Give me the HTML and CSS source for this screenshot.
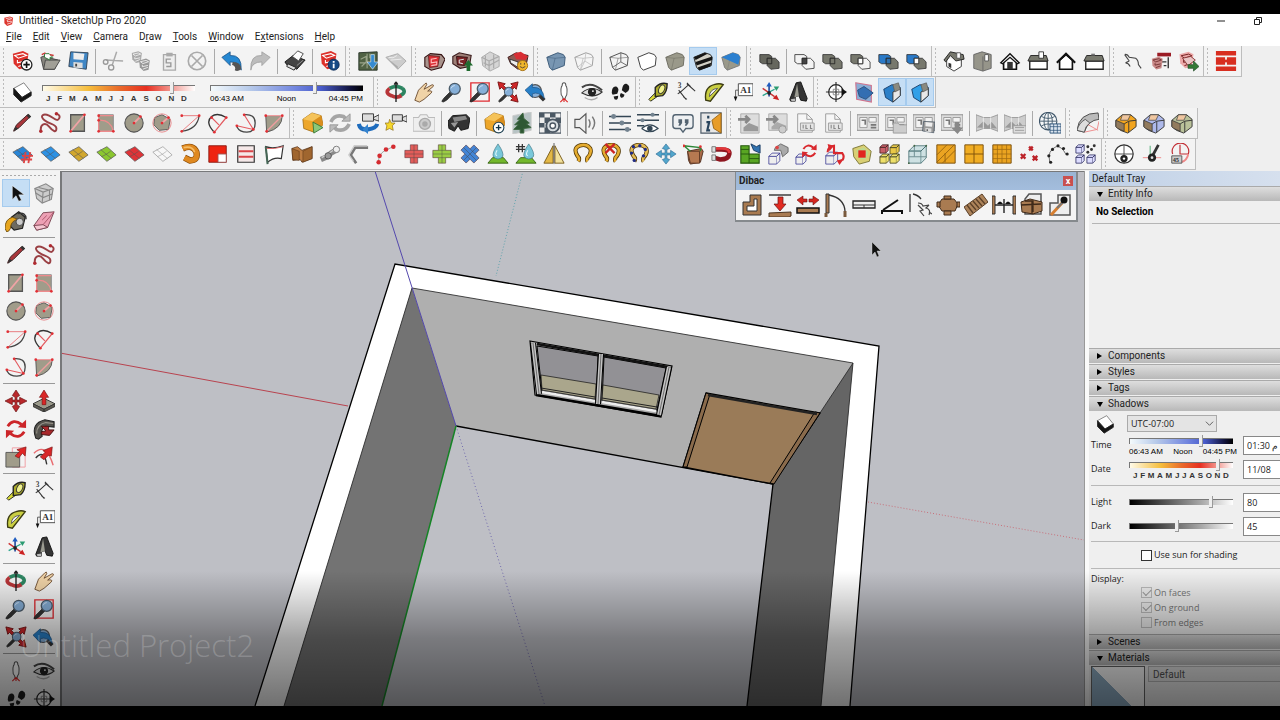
FILE: index.html
```html
<!DOCTYPE html>
<html lang="en">
<head>
<meta charset="utf-8">
<title>Untitled - SketchUp Pro 2020</title>
<link rel="stylesheet" href="styles.css">
</head>
<body>
<div class="app">
  <header class="titlebar">
    <svg class="logo" viewBox="0 0 24 24"><path d="M3 5 15 2 22 5 20 19 9 23 3 17Z" fill="#dc352d"/><path d="M6 7l9-2 4 2-10 3 1 4 8-2v4l-9 3" fill="none" stroke="#fff" stroke-width="1.5"/></svg>
    <h1 class="title">Untitled - SketchUp Pro 2020</h1>
    <div class="winctl">
      <button aria-label="Minimize"><svg viewBox="0 0 12 12"><path d="M2 6h8" stroke="#222" fill="none"/></svg></button>
      <button aria-label="Restore"><svg viewBox="0 0 12 12"><path d="M2.500 4.500h5v5h-5zM4.500 4V2.500h5v5H8" stroke="#222" fill="none"/></svg></button>
    </div>
  </header>
  <nav class="menubar">
    <button><u>F</u>ile</button><button><u>E</u>dit</button><button><u>V</u>iew</button><button><u>C</u>amera</button><button>D<u>r</u>aw</button><button><u>T</u>ools</button><button><u>W</u>indow</button><button>E<u>x</u>tensions</button><button><u>H</u>elp</button>
  </nav>
  <div class="toolrows">
    <div class="row">
      <div class="group" data-tools="new open save | cut copy paste delete | undo redo | print | model-info"></div>
      <div class="group" data-tools="add-location toggle-terrain"></div>
      <div class="group" data-tools="warehouse share-model share-component extension-warehouse"></div>
      <div class="group" data-tools="x-ray back-edges | wireframe hidden-line shaded *textured monochrome"></div>
      <div class="group" data-tools="outer-shell | intersect union subtract trim split"></div>
      <div class="group" data-tools="iso top front right back left"></div>
      <div class="group" data-tools="interact component-options component-attributes"></div>
      <div class="group" data-tools="brick-wall"></div>
    </div>
    <div class="row">
      <div class="group" data-tools="shadow">
        <label class="scale year"><input type="range" aria-label="Date" value="86"><span class="ticks"><i>J</i><i>F</i><i>M</i><i>A</i><i>M</i><i>J</i><i>J</i><i>A</i><i>S</i><i>O</i><i>N</i><i>D</i></span></label>
        <label class="scale day"><input type="range" aria-label="Time" value="69"><span class="ticks"><i>06:43 AM</i><i>Noon</i><i>04:45 PM</i></span></label>
      </div>
      <div class="group" data-tools="orbit pan zoom zoom-window zoom-extents previous position-camera look-around walk"></div>
      <div class="group" data-tools="tape dimension protractor text axes text-3d"></div>
      <div class="group" data-tools="section-plane show-planes *show-cuts *show-fill"></div>
    </div>
    <div class="row">
      <div class="group" data-tools="line freehand rectangle rotated-rectangle circle polygon arc two-point-arc three-point-arc pie"></div>
      <div class="group" data-tools="enscape-start sync orbit-sync add-view screenshot | vr | add-asset vegetation material-editor | sound | visual-settings view-settings | feedback about"></div>
      <div class="group" data-tools="export-scene export-as report-doc report-table | plan-a plan-b plan-save plan-down | pano pano-batch | web-export"></div>
      <div class="group" data-tools="bend"></div>
      <div class="group" data-tools="round-corner sharp-corner bevel"></div>
    </div>
    <div class="row">
      <div class="group" data-tools="tile-grid tile-blue tile-gold tile-green tile-red tile-white extrude-c red-corner stripes flag box-brown pipe bracket curve-dots plus-red plus-green cross-blue drop drop-grid mirror hook hook-cut hook-dots scatter crate magnet blocks cube-grey cube-turn cube-spin inset quad-cubes glass-box wood-a wood-b wood-c red-marks arc-dots array"></div>
      <div class="group" data-tools="compass sun-angle protractor-red"></div>
    </div>
  </div>

  <main class="workspace">
    <aside class="sidebar" data-tools="*select component bucket eraser | line freehand rectangle rotated-rectangle circle polygon arc two-point-arc three-point-arc pie | move push-pull rotate follow-me scale offset | tape dimension protractor text axes text-3d | orbit pan zoom zoom-window zoom-extents previous | position-camera look-around walk section-plane"></aside>

    <section class="viewport" aria-label="Model view">
      <svg class="scene" viewBox="62 172 1022 534" preserveAspectRatio="xMidYMin slice">
        <path d="M60 353 348 406" stroke="#b8434f" fill="none"/>
        <path d="M868 502 1084 540" stroke="#c8707b" stroke-dasharray="1 2" fill="none"/>
        <path d="M523 171 496 276" stroke="#60a3ad" stroke-dasharray="1 2" fill="none"/>
        <path d="M395 264 879 346 850 706H821L853 363 412 288 284 706H255Z" fill="#fff"/>
        <path d="M412 288 853 363 773 484 456 426Z" fill="#afafaf"/>
        <path d="M412 288 456 426 382 706H284Z" fill="#737373"/>
        <path d="M853 363 773 484 747 706H821Z" fill="#656565"/>
        <path d="M255 706 395 264 879 346 850 706" fill="none" stroke="#000" stroke-width="1.300"/>
        <path d="M284 706 412 288 853 363 821 706M853 363 773 484" fill="none" stroke="#222" stroke-width=".8"/>
        <path d="M456 426 773 484 747 706" fill="none" stroke="#000" stroke-width="1.300"/>
        <path d="M530 341 672 366 661 417 535 395Z" fill="#aaa" stroke="#000" stroke-width="1.200"/>
        <path d="M537 346 598 356 596 400 542 391Z" fill="#929195" stroke="#000"/>
        <path d="M604 357 666 368 657 410 602 401Z" fill="#929195" stroke="#000"/>
        <path d="M541 375 596 384 595 399 542 390ZM603 385 659 395 656 409 602 400Z" fill="#aaa68c" stroke="#111" stroke-width=".7"/>
        <path d="M541 388 595 397M602 398 657 407" stroke="#222" fill="none"/>
        <path d="M542 392 595 401M602 402 656 411" stroke="#eee" stroke-width="2.500" fill="none"/>
        <path d="M536 395 661 416" stroke="#000" stroke-width="2.500" fill="none"/>
        <path d="M537 344 668 367" stroke="#111" stroke-width="2.500" fill="none"/>
        <path d="M533 343 539 394M601 354 598 404M669 367 659 415" stroke="#000" stroke-width="6" fill="none"/>
        <path d="M533 343 539 394M601 354 598 404M669 367 659 415" stroke="#c4c4c4" stroke-width="4" fill="none"/>
        <path d="M533 343 539 394M601 354 598 404M669 367 659 415" stroke="#333" stroke-width=".6" fill="none"/>
        <path d="M706 393 820 413 773 484 683 467Z" fill="#9a7b58" stroke="#000" stroke-width="1.300"/>
        <path d="M706 393 710 394 687 467 683 467ZM820 413 815 412 770 483 774 484Z" fill="#8a6b4c" stroke="#000" stroke-width="1"/>
        <path d="M708 395 817 414" stroke="#222" stroke-width="2.500" fill="none"/>
        <path d="M375 171 456 426" stroke="#5448ad" fill="none"/>
        <path d="M456 426 545 706" stroke="#7069ad" stroke-dasharray="1 2.500" fill="none"/>
        <path d="M456 426 382 706" stroke="#158425" stroke-width="1.500" fill="none"/>
        <path d="M872 242v13l3-3 2 5 2-1-2-5h4Z" fill="#111" stroke="#ddd" stroke-width=".4"/>
      </svg>
      <div class="float">
        <header class="float-title"><span>Dibac</span><button class="close" aria-label="Close">x</button></header>
        <div class="float-tools" data-tools="d-wall d-parallel d-extend d-door d-window d-swing d-hand d-table d-stairs d-dimension d-convert d-paint"></div>
      </div>
    </section>

    <aside class="tray">
      <h2 class="tray-title">Default Tray</h2>
      <button class="head open">Entity Info</button>
      <div class="entity"><strong>No Selection</strong></div>
      <button class="head">Components</button>
      <button class="head">Styles</button>
      <button class="head">Tags</button>
      <button class="head open">Shadows</button>
      <div class="shadows">
        <div class="zone">
          <span class="zone-icon" data-icon="shadow"></span>
          <span class="picker"><select aria-label="Time zone"><option>UTC-07:00</option></select><svg viewBox="0 0 10 10"><path d="M1 3l4 4 4-4" fill="none" stroke="#555"/></svg></span>
        </div>
        <div class="field"><label for="t">Time</label><div class="scale day small"><input type="range" aria-label="Time of day" value="70"><span class="ticks"><i>06:43 AM</i><i>Noon</i><i>04:45 PM</i></span></div><input class="num" id="t" value="01:30 م"></div>
        <div class="field"><label for="d">Date</label><div class="scale year small"><input type="range" aria-label="Day of year" value="87"><span class="ticks"><i>J</i><i>F</i><i>M</i><i>A</i><i>M</i><i>J</i><i>J</i><i>A</i><i>S</i><i>O</i><i>N</i><i>D</i></span></div><input class="num" id="d" value="11/08"></div>
        <hr class="wide">
        <div class="field"><label for="l">Light</label><div class="scale grey"><input type="range" aria-label="Light level" value="80"></div><input class="num" id="l" value="80"></div>
        <div class="field"><label for="k">Dark</label><div class="scale grey"><input type="range" aria-label="Dark level" value="45"></div><input class="num" id="k" value="45"></div>
        <hr>
        <label class="check sun"><input type="checkbox">Use sun for shading</label>
        <hr>
        <div class="display">Display:</div>
        <label class="check"><input type="checkbox" checked disabled>On faces</label>
        <label class="check"><input type="checkbox" checked disabled>On ground</label>
        <label class="check"><input type="checkbox" disabled>From edges</label>
      </div>
      <button class="head">Scenes</button>
      <button class="head open">Materials</button>
      <div class="materials"><div class="swatch"></div><input class="matname" aria-label="Material name" value="Default" disabled></div>
    </aside>
  </main>
  <div class="shade"><span class="caption">Untitled Project2</span></div>
</div>
<script src="app.js"></script>
</body>
</html>
```
FILE: styles.css
```css
* { box-sizing: border-box; }
body { margin: 0; background: #000; font-family: Roboto, "Open Sans", "Noto Sans", sans-serif; font-size: 10px; line-height: 14px; color: #222; }
button, input, select { font: inherit; color: inherit; margin: 0; }
button { border: 0; padding: 0; background: none; }
.app { position: relative; height: 100vh; border: solid #000; border-width: 14px 0; display: flex; flex-direction: column; overflow: hidden; background: #efefef; }
.titlebar { display: flex; align-items: center; height: 13px; padding: 0 16px 0 3px; background: #fff; flex: none; }
.logo { width: 11px; height: 12px; }
.title { margin: 0 0 0 5px; font-size: 10px; font-weight: 400; line-height: 12px; }
.winctl { margin-left: auto; display: flex; gap: 25px; }
.winctl button, .winctl svg { width: 12px; height: 12px; display: block; }
.menubar { display: flex; gap: 11px; height: 19px; padding: 0 6px; background: #fff; flex: none; }
.menubar button { line-height: 19px; }

.toolrows { flex: none; padding-bottom: 1px; }
.row { display: flex; height: 31px; }
.group { display: flex; align-items: center; padding-right: 1px; background: #f3f3f3; border: solid #bdbdbd; border-width: 0 1px 1px 0; }
.group::before { content: ""; width: 8px; height: 27px; flex: none; background: linear-gradient(#bbb 50%, transparent 50%) 3px 0 / 1px 4px repeat-y; }
.tool { width: 28px; height: 28px; padding: 3px; flex: none; }
.tool svg { display: block; width: 22px; height: 22px; }
.tool.on { background: #c5def5; border: 1px solid #a5cbee; padding: 2px; }
.sep { width: 7px; height: 25px; flex: none; background: linear-gradient(#aaa, #aaa) 3px 0 / 1px 100% no-repeat; }

.scale { display: flex; flex-direction: column; min-width: 0; }
.group .scale { width: 153px; margin: 0 9px 0 6px; }
.ticks { display: flex; justify-content: space-between; padding: 0 4px; font: 700 8px/9px "Liberation Sans", Arial, sans-serif; color: #333; white-space: nowrap; }
.group .year .ticks { padding: 0 8px 0 4px; }
.ticks i { font-style: normal; }
.scale.day .ticks { padding: 0; font-weight: 400; color: #000; }
.day.small .ticks { margin-right: -4px; }
input[type=range] { appearance: none; display: block; width: 100%; height: 12px; margin: 0; background: none; }
input[type=range]::-webkit-slider-runnable-track { height: 6px; border-top: 1px solid #777; border-left: 1px solid #777; background: var(--track); }
input[type=range]::-webkit-slider-thumb { appearance: none; width: 4px; height: 12px; margin-top: -4px; background: #eee; border: solid #999; border-width: 0 1px 1px 0; }
.year { --track: linear-gradient(90deg, #fffbe9, #f5bd3c 30%, #e96b2b 50%, #e72f21 68%, #f29b94 85%, #fff); }
.day { --track: linear-gradient(90deg, #f4fafc, #b8cbea 25%, #7387df 55%, #4a5dcc 72%, #10123a 92%, #000); }
.grey { --track: linear-gradient(90deg, #000, #555 35%, #aaa 70%, #fff); }

.workspace { flex: 1; min-height: 0; display: flex; }
.sidebar { flex: none; width: 60px; padding: 0 0 0 2px; display: flex; flex-wrap: wrap; align-content: flex-start; background: #f3f3f3; overflow: hidden; }
.sidebar::before { content: ""; width: 54px; height: 8px; background: linear-gradient(90deg, #aaa 50%, transparent 50%) 0 4px / 4px 1px repeat-x; }
.sidebar .sep { width: 53px; height: 6px; background: linear-gradient(#999, #999) 1px 2px / 100% 1px no-repeat; }
.viewport { position: relative; flex: 1; min-width: 0; overflow: hidden; background: #bebfc5; border: solid #77787a; border-width: 1px 0 0 2px; }
.scene { display: block; width: 100%; height: 100%; }
.float { position: absolute; top: 0; right: 6px; background: #f4f4f4; border: solid #85898d; border-width: 0 2px 2px 1px; }
.float-title { display: flex; justify-content: space-between; align-items: center; height: 18px; padding: 0 3px; background: linear-gradient(#9ab4d3, #a3bddd); font-weight: 700; }
.close { width: 10px; height: 10px; background: #c8504f; color: #fff; font-size: 9px; line-height: 9px; font-weight: 700; }
.float-tools { display: flex; height: 30px; align-items: center; padding: 0 2px; }
.float .tool { padding: 2px; }
.float .tool svg { width: 24px; height: 24px; }

.tray { flex: none; width: 196px; padding-left: 4px; border-left: 1px solid #999; background: #efefef; box-shadow: inset 4px 0 #fafafa; overflow: hidden; display: flex; flex-direction: column; }
.tray > * { flex: none; }
.tray-title { margin: 0; padding-left: 3px; height: 15px; font-size: 10px; font-weight: 400; line-height: 15px; background: linear-gradient(90deg, #bfd0e6, #d6e0ee); }
.head { display: flex; align-items: center; height: 15px; margin-bottom: 1px; padding-left: 8px; gap: 5px; background: linear-gradient(#dedede, #b8b8b8); border-top: 1px solid #aaa; text-align: left; }
.head::before { content: ""; border: solid transparent; border-width: 3px 0 3px 5px; border-left-color: #000; margin-right: 1px; }
.head.open::before { border-width: 5px 3px 0; border-color: #000 transparent transparent; margin-right: 0; }
.entity { height: 146px; padding: 3px 0 0 3px; }
.entity strong { display: block; padding: 0 4px 4px; border-bottom: 1px solid #b5b5b5; color: #000; }
.shadows { padding: 0 0 4px 2px; width: 210px; font-size: 9px; font-family: "Open Sans", "Noto Sans", sans-serif; }
.zone { display: flex; align-items: center; padding: 2px 0 0 4px; height: 21px; gap: 12px; }
.zone-icon svg { display: block; width: 20px; height: 20px; }
.picker { position: relative; width: 90px; }
.picker select { appearance: none; display: block; width: 100%; height: 17px; padding: 0 3px; line-height: 14px; border: 1px solid #aaa; border-radius: 0; background: #e4e4e4; }
.picker svg { position: absolute; right: 3px; top: 4px; width: 9px; height: 9px; pointer-events: none; }
.field { display: grid; grid-template-columns: 38px 104px 60px; align-items: center; height: 24px; }
.num { width: 100%; height: 19px; margin-left: 10px; padding: 0 3px; border: 1px solid #888; background: #fff; }
.shadows hr { height: 1px; margin: 3px 0; border: 0; background: #b8b8b8; }
.shadows .wide { margin: 4px 0; }
.check { display: flex; align-items: center; gap: 2px; height: 15px; padding-left: 50px; color: #777; }
.check.sun { height: 20px; color: #222; }
.check input { appearance: none; width: 11px; height: 11px; border: 1px solid #333; background: #fff; position: relative; }
.check input:disabled { border-color: #bbb; background: #eee; }
.check input:checked::after { content: ""; position: absolute; left: 1px; top: 1px; width: 7px; height: 4px; border: solid #999; border-width: 0 0 1px 1px; transform: rotate(-45deg); }
.display { height: 13px; }
.materials { display: flex; gap: 3px; padding-left: 2px; }
.swatch { width: 54px; height: 54px; border: 1px solid #666; background: linear-gradient(45deg, #90afc6 50%, #fff 50%); flex: none; }
.matname { width: 140px; height: 16px; padding: 0 4px; border: 1px solid #bbb; background: #e8e8e8; color: #555; }

.shade { position: absolute; left: 0; right: 0; bottom: 0; height: 135px; pointer-events: none; background: linear-gradient(transparent, rgba(0,0,0,.36) 50%, rgba(0,0,0,.56)); }
.caption { display: block; padding: 55px 0 0 20px; font-size: 31px; line-height: 38px; font-weight: 300; font-family: "Open Sans", "Noto Sans", sans-serif; color: rgba(255,255,255,.2); }
```
FILE: app.js
```js
const P = (d, f = 'none', s = 'none', w = 1) => `<path d="${d}" fill="${f}" stroke="${s}" stroke-width="${w}"/>`;
const L = (d, s = '#333', w = 1) => P(d, 'none', s, w);
const C = (x, y, r, f = 'none', s = 'none', w = 1) => `<circle cx="${x}" cy="${y}" r="${r}" fill="${f}" stroke="${s}" stroke-width="${w}"/>`;
const T = (x, y, t, f = '#222', z = 9) => `<text x="${x}" y="${y}" fill="${f}" font-size="${z}" font-family="Liberation Serif, serif" font-weight="700">${t}</text>`;
const D = (pts, f = '#e02f35', r = 1.5) => pts.map(([x, y]) => C(x, y, r, f)).join('');
const G = (t, x) => `<g transform="${t}">${x}</g>`;
const sl = (f, w = '#fff') => P('M3 5 14 2 20 5 18 20 10 22 4 16Z', f) + L('M5 7l9-2 4 2-9 3zM8 12v3l9-2M9 19l8-3', w, 1.2);
const cube = (f, s = '#333', fr = f, inner = true) => P('M2 8 14 3 20 5 22 8 21 17 8 22 5 19Z', f, s) + (inner ? L('M2 8 11 9 22 8M11 9 8 22', s, .5) : '');
const solids = (a, b, mid) => P('M2 5h10l3 2v8H5l-3-2Z', a, '#333', .9) + P('M10 9h9l4 4v7l-9 1-4-4Z', b, '#333', .9) + P('M10 9h5v6h-5Z', mid, '#222', .9);
const tile = (f, s = '#555') => P('M2 10 13 4 23 13 13 20Z', f, s, .8) + L('M7 15q5-2 10-6M6 7l12 10', s, .6);
const plus = f => P('M8 2h8v6h6v8h-6v6H8v-6H2V8h6Z', f, '#54333a', .6) + L('M2 12h20M12 2v20M8 8h8M8 16h8', '#4449', .8);
const box3 = (x, y, s, f, c) => P(`M${x} ${y + s * .3}h${s * .7}v${s * .7}h${-s * .7}Z`, f, c, .9) + P(`M${x} ${y + s * .3}l${s * .3} ${-s * .3}h${s * .7}l${-s * .3} ${s * .3}Zm${s * .7} 0l${s * .3} ${-s * .3}v${s * .7}l${-s * .3} ${s * .3}`, f, c, .9);
const lens = P('M10 12 3 19l-2 3 1 1 4-2 7-7Z', '#333', '#222') + C(15, 8.5, 6, '#86afd8', '#4a5a68', 1.4) + L('M11 8q1-3 4-3', '#d5e6f5');
const hook = c => L('M8 20q2-3-1-6-5-8 2-11 8-3 12 3 2 5-3 10-1 3 0 4', '#553b08', 4.5) + L('M8 20q2-3-1-6-5-8 2-11 8-3 12 3 2 5-3 10-1 3 0 4', c, 2.8);
const drop = P('M12 1Q5 11 7 15q5 5 10 0Q19 11 12 1', '#79c7d9', '#3d7483', .7) + L('M11 8q-3 5 0 6', '#e0f6fa', 1.2);
const gem = P('M2 8 12 1 22 4 24 14 14 22 3 18Z', '#eda62a', '#9a640a', .8) + P('M2 8 12 1 22 4 13 10Z', '#f5c35a') + P('M13 10 22 4 24 14 14 22Z', '#d98e1d');
const house = (f, r) => P('M5 11v10h14v-10', '#fff', '#111', 1.8) + P(f, r || '#fff', '#111', 1.5);
const frame = P('M0 3h24v17H0Z', '#ddd', '#888') + P('M3 6h8v11H3ZM13 6h8v5h-8Z', '#f3f3f3', '#999') + L('M5 9h4v5M15 14h6M15 17h6', '#777', 1.8);
const land = P('M0 3 8 6h8l8-3v18l-8-3H8l-8 3Z', '#ccc', '#999') + P('M1 17l7-7 5 5 4-4 6 7Z', '#999') + L('M8 6v12M16 6v12', '#eee');
const turn = c => L('M3 9q6-9 15-2', c, 3) + P('M14 10l9 1 0-9Z', c) + L('M21 15q-6 9-15 2', c, 3) + P('M10 14l-9-1 0 9Z', c);
const doc = P('M4 2h10l6 6v14H4Z', '#f6f6f6', '#999') + L('M14 2v6h6', '#999') + P('M7 12h15v8H7Z', '#e5e5e5', '#999') + L('M10 14v4m3-4v4h2m3-4v4h2', '#888', 1.2);
const plank = '#a97b51';
const bal = P('M3 9 12 4l9 3v9l-8 7-8-5Z', '#2a7fc8', '#173d69') + P('M13 12 21 8v8l-8 7Z', '#e8e8e8', '#333') + P('M13 4l6-2 2 7-6 3Z', '#8a8a80', '#555', .7);
const boxR = c => P('M1 9 8 3h9l6 5v8l-9 7-8-3-5-4Z', c, '#333') + P('M8 3h9l-3 6H6Z', '#efc6a0', '#444', .8) + P('M1 9l9 4v8l-7-3-2-2Z', '#927b5d', '#333', .8) + L('M10 13l5-3 8-1M15 10v12', '#333');
const floppy = (f, x = 0) => G(`translate(${x} 0)`, P('M4 2 23 3 21 21 2 18Z', f, '#345') + P('M7 3l12 1-1 7-11-1Z', '#eee') + P('M7 13l10 1v6l-10-1Z', '#ddd') + L('M10 15v3', '#444', 2));

const icons = {
  'new': G('translate(-1 -1)', sl('#dc302a')) + C(17, 16, 5.8, '#fff', '#222', 1.4) + L('M17 12.500v7M13.500 16h7', '#111', 1.8),
  open: P('M2 8l5-2 2 2 12 3-4 10H5Z', '#88867f', '#444') + P('M7 11h16l-6 10H5Z', '#a19f97', '#444') + P('M6 8V4h5l4 4h-3v3Z', '#fff', '#287b38') + L('M3 5l4-2M12 5l4 1', '#c33', 1.5),
  save: floppy('#4187c5'),
  cut: L('M16 2 11 17M4 11l19 1', '#aaa', 1.6) + C(10, 19, 2.8, 'none', '#999', 1.5) + C(4, 13, 2.5, 'none', '#999', 1.5),
  copy: G('scale(.65)', sl('#aaa')) + G('translate(8 8) scale(.68)', sl('#999')),
  paste: P('M6 5h13v17H6Z', '#eee', '#aaa', 1.5) + P('M9 3h7v4H9Z', '#aaa') + L('M14 10H9v4h5v4H9', '#999', 1.5),
  'delete': C(12, 12, 9.5, 'none', '#aaa', 1.8) + L('M6 6l12 12M18 6 6 18', '#aaa', 1.8),
  undo: P('M1 8 10 2v4q13-1 12 16-1-9-12-9v4Z', '#2688d2', '#174d80', .8) + P('M13 13q9 0 9 8-4 3-7 1 2-4-3-6Z', '#555'),
  redo: P('M23 8 14 2v4Q1 5 2 22q1-9 12-9v4Z', '#bdbdbd', '#999', .8),
  print: P('M1 13 10 6l13 5-9 10-11-5Z', '#444', '#111') + P('M9 7l6-6 6 3-5 8Z', '#fff', '#444') + P('M4 15l9 4-2 3-8-4Z', '#ddd', '#222') + L('M14 17l7-6', '#999'),
  'model-info': G('translate(-1 -1)', sl('#dc302a')) + C(16, 16, 6, '#164a85', '#0b2b57') + L('M16 12v2M16 15v5', '#fff', 2),
  'add-location': P('M2 3 22 2v20H2Z', '#506244', '#293529') + L('M4 10l6-3v6l-5 5M11 4v16M3 14h7M14 4v5', '#9aa58a', 1.2) + P('M15 5h4v8h4l-6 8-6-8h4Z', '#358bd0', '#fff', .6),
  'toggle-terrain': P('M1 8 14 4l9 8-9 9Z', '#ccc', '#aaa') + P('M1 8 14 18v3Z', '#aaa') + L('M4 8q5 2 9-2M6 11l12-1', '#eee'),
  warehouse: P('M2 8 8 4l12 1 4 5-4 9-11 3-7-4Z', '#a8938c', '#311', 1.2) + P('M6 6l12 1-2 11-9 1Z', '#db2f35', '#622') + L('M15 9l-6 1v4l6-1v3l-6 1', '#fbb', 1.2),
  'share-model': P('M2 7 9 3l13 3-2 12-10 2-8-5Z', '#9e8078', '#3a1c1c', 1.2) + P('M6 7l12 1-3 9-8-1Z', '#7c2427', '#311') + L('M14 10l-5 1v3l4 1', '#ddd', 1.2) + P('M17 23v-6h-3l5-6 5 6h-3v6Z', '#206b2f'),
  'share-component': P('M3 8 12 2l10 5v11l-10 5-8-6Z', '#d5d5d5', '#aaa') + L('M3 8l8 4v10M11 12l11-5M7 6v12M16 5v15M5 14l6 3 11-6', '#aaa', 1.3),
  'extension-warehouse': P('M1 8 10 3l13 3-2 10-9 5-8-6Z', '#8c5a52', '#3a1515') + P('M7 4l8-2 8 5-3 4-10-1Z', '#d82e34') + P('M3 10l9 3v6l-8-5Z', '#eee', '#333') + C(17, 17, 5.5, '#f1b72b', '#a46e10') + L('M14 18q3 3 6 0M15 14v2M19 14v2', '#543'),
  'x-ray': cube('#7896b2', '#385675'),
  'back-edges': cube('#f5f5f5', '#999') + L('M8 22 13 12 14 3M13 12l8 5M13 12 5 19', '#bbb', .8),
  wireframe: cube('none', '#444') + L('M5 19l9-6 7 4M14 3v10', '#555', .9),
  'hidden-line': cube('#fff', '#333', '#fff', false),
  shaded: cube('#9a998a', '#6a695e'),
  textured: cube('#d2d0c6', '#222', '', false) + P('M2 8 14 3l3 1L4 11ZM4 13l18-6v4L5 17ZM6 19l15-5-1 4L8 22Z', '#151515'),
  monochrome: cube('#9a998a', '#777') + P('M2 8 14 3 20 5 22 8 20 16Z', '#2c80d0'),
  'outer-shell': solids('#66675e', '#66675e', '#66675e'), intersect: solids('none', 'none', '#444'),
  union: solids('#77786d', '#77786d', '#77786d'), subtract: solids('#77786d', 'none', '#fff'),
  trim: solids('#2a7ac8', '#77786d', '#2f70ad'), split: solids('#2a7ac8', '#77786d', '#fff'),
  iso: P('M4 10v8l8 5 8-5V9', '#fff', '#333') + P('M1 11 8 2l14 3 1 5-9 2-6-6-5 7Z', '#77786d', '#222') + P('M15 3h4v6h-4Z', '#fff', '#555') + P('M6 14l3 1v5l-3-2Z', '#333'),
  top: P('M3 5 12 2l10 3v15l-9 3-10-3Z', '#96958a', '#666') + L('M13 7v16', '#666') + P('M15 5h4v7h-4Z', '#fff', '#555'),
  front: house('M2 14 12 4l10 10-2 1-8-7-8 7Z') + P('M9 13h6v8H9Z', '#333'),
  right: P('M3 12h19v9H3Z', '#fff', '#222', 1.5) + P('M1 12l3-6h17l2 6Z', '#77786d', '#222') + P('M13 2h5v7h-5Z', '#fff', '#333'),
  back: P('M5 11v10h14v-10L12 5Z', '#fff', '#111', 1.8) + L('M2 14 12 4l10 10', '#111', 2.2),
  left: P('M3 12h19v9H3Z', '#fff', '#222', 1.5) + P('M1 12l3-6h17l2 6Z', '#77786d', '#222') + P('M9 4h4v2H9Z', '#777'),
  interact: P('M4 5q3-1 5 3l7 1q3 2 3 7l3 4M4 5l5 7M9 12l-4 2q3 0 5 4', 'none', '#444', 1.2),
  'component-options': P('M9 3h15v4H9Z', '#9b1b24') + L('M21 8v12M10 13h9M16 17h3', '#333', 1.5) + G('translate(1 6) scale(.7)', sl('#c98988', '#622')),
  'component-attributes': G('scale(.9)', sl('#eba8a8', '#722')) + P('M6 9l9-2 5 4-8 6Z', '#eac6c6', '#833') + P('M12 16h6v-4l6 6-6 5v-3h-6Z', '#347a36', '#1d4722', .7),
  'brick-wall': P('M1 1h22v5H1ZM1 8h10v8H1ZM13 8h10v8H13ZM1 18h22v5H1Z', '#d82e20') + L('M8 12h8', '#d82e20', 3),
  shadow: P('M3 8 14 2l8 10-10 6Z', '#fff', '#777') + P('M3 8v7l8 8 11-7v-4l-10 6Z', '#161616', '#222'),
  orbit: L('M5 8q7-4 14 0M19 8q5 5-3 8', '#2c8561', 4) + L('M5 8q-6 5 2 8 6 3 11 0', '#b73538', 4) + L('M12 1v22M12 1l-2 3M12 1l2 3', '#222', 1.5),
  pan: P('M2 21l4-11 7-7q2-2 2 1l-3 5 9-5q2 0 1 2l-6 5q6-1 4 2l-8 7-5 3Z', '#f0d3a7', '#6d4e31'),
  zoom: lens,
  'zoom-window': L('M2 2h20v20H2Z', '#e02f35', 1.5) + lens,
  'zoom-extents': P('M1 1l8 2-2 2 3 3-2 2-3-3-2 2ZM23 1l-8 2 2 2-3 3 2 2 3-3 2 2ZM23 23l-8-2 2-2-3-3 2-2 3 3 2-2Z', '#cf2629', '#711') + G('translate(1 5) scale(.78)', lens),
  previous: L('M13 13l8 8', '#333', 4) + C(11, 11, 7, '#86afd8', '#555', 1.3) + P('M0 10 8 3v4q12-1 13 12-6-8-13-5v4Z', '#287fc7', '#164d80', .7),
  'position-camera': P('M12 2q2 0 2 3 2 2 1 10-2 3-2 5h-2q0-3-2-5-1-8 1-10 0-3 2-3Z', '#fff', '#555', 1.1) + L('M8 23l4-4 4 4M12 19v4', '#d22', 1.2),
  'look-around': L('M1 7q10-7 22 3', '#444', 2.2) + P('M1 13Q11 4 23 12 14 20 1 13Z', '#ddd', '#333', 1.2) + C(12, 12, 4.500, '#222') + C(13, 11, 1, '#fff') + L('M4 18q8 5 14 0', '#aaa', 1.5),
  walk: P('M3 13q0-8 5-7 4 2 1 8l-5 1ZM5 17l5-1q0 6-4 4ZM14 10q1-8 5-7 5 2 2 8l-3 2ZM13 13l4 2q-1 4-4 3-2-2 0-5Z', '#1d1d1d'),
  tape: P('M2 20l8-8 4 3-10 7Z', '#dadb37', '#222') + P('M9 7q6-6 13-4 0 9-5 13l-8 1Z', '#aaa92a', '#222', 1.5) + `<ellipse cx="16" cy="9" rx="3" ry="5" fill="#eff18c" stroke="#333" transform="rotate(25 16 9)"/>`,
  dimension: L('M5 13 15 4M4 10l8 10M13 3l9 8M3 14l4-3M13 2l4 4M9 17l4 3', '#333', 1.1) + T(3, 8, '3', '#444', 8),
  protractor: P('M3 21Q1 7 12 4q6-2 10 0L8 22Z', '#c9ce42', '#3c3c12', 1.5) + P('M7 17q0-8 9-9Z', '#f3f3f3', '#555'),
  text: P('M8 3h16v13H8Z', '#fff', '#444') + T(10, 13, 'A1', '#333', 10) + L('M8 10H5v8', '#555') + P('M3 17h4l-2 5Z', '#111'),
  axes: L('M11 5v12', '#284c9c', 1.8) + P('M8 6l3-5 3 5Z', '#1e5cc0') + L('M4 16 17 9', '#29a28c', 1.5) + P('M16 6h6l-3 5Z', '#2a9b71') + L('M4 8l13 9', '#c33', 1.5) + P('M15 19l7 2-3-6Z', '#c22') + C(11, 13, 2, '#222'),
  'text-3d': P('M3 20 10 2l5-1 7 18-1 3-6-1-2-5-4 1v5H4Z', '#343434', '#111') + P('M11 3l2 13-5 2Z', '#9b9b91') + P('M4 20l5-1v3H5Z', '#bbb'),
  'section-plane': C(12, 12, 8, '#fff', '#222', 1.3) + L('M1 12h20M12 1v22', '#333', 1.3) + L('M9 9h6v6H9Z', '#888') + P('M18 8l6 4-6 4Z', '#111'),
  'show-planes': P('M3 2l17 3v18L4 20Z', '#89aed6', '#cf738d', 1.2) + P('M5 10l7-4 10 7-8 7-7-3Z', '#336eb2', '#2d4f7c'),
  'show-cuts': bal, 'show-fill': bal.replace('#2a7fc8', '#31a0e8'),
  line: P('M3 20l3-6L18 3l3 2L9 17l-6 4Z', '#a8353a', '#3a2222') + P('M3 21l2-5 3 2ZM17 4l2-2 3 3-2 2Z', '#333'),
  freehand: L('M2 21C1 13 7 11 11 16s8 7 8 2S12 14 6 9 5 1 11 4 20 11 22 7 19 2 19 2', '#9a4044', 2.1) + D([[2, 21], [19, 2]], '#b02a30', 1.9),
  rectangle: P('M4 3h15v18H4Z', '#a09c8a', '#555', 1.4) + L('M4 21 19 3', '#f0a3a5', 2) + D([[4, 21], [19, 3]]),
  'rotated-rectangle': P('M4 3h16v18H4Z', '#a09c8a', '#888') + L('M4 5v16h16M4 9q13-1 16 12M4 4h16', '#ee8b8d', 1.4) + D([[4, 21], [20, 21], [4, 4], [4, 9]]),
  circle: C(12, 12, 10, '#a09c8a', '#555', 1.2) + L('M12 12l7-7', '#f0a3a5', 2) + D([[12, 12], [19, 5]]),
  polygon: P('M12 3 21 8 19 19 9 20 3 14 4 6Z', '#a09c8a', '#555') + C(12, 12, 10, 'none', '#e8888a') + L('M12 12l7-6', '#f0a3a5', 2) + D([[12, 12], [19, 6]]),
  arc: L('M3 4h19L3 21', '#e87478') + L('M22 4q-2 15-19 17', '#444', 1.3) + D([[3, 4], [22, 4], [3, 21]]),
  'two-point-arc': L('M7 21Q-2 11 5 5q6-5 16 1', '#333', 1.5) + L('M5 6l8 8M21 6 8 22', '#e35b60', 1.3) + D([[5, 6], [21, 6], [8, 22]]),
  'three-point-arc': L('M10 3q12-1 12 9t-9 10q-8 0-11-6', '#444', 1.4) + L('M10 3l10 16L2 15', '#e35b60', 1.2) + D([[10, 3], [20, 19], [2, 15]]),
  pie: P('M3 4h18q0 14-17 18Z', '#a09c8a', '#555') + L('M3 4h18M4 21 21 4', '#ef9d9f', 1.5) + D([[3, 4], [21, 4], [4, 21]]),
  'enscape-start': gem + P('M13 11l11 6-10 6Z', '#8bc779', '#397a3a'),
  sync: L('M2 11q4-9 14-6l4 4M22 13q-4 9-14 6l-4-4', '#a5a5a5', 4) + P('M14 10h9V2ZM10 14H1v8Z', '#bbb', '#999'),
  'orbit-sync': P('M6 2h12v8H6ZM18 6l6-3v7l-6-2Z', '#ddd', '#333') + L('M2 13q1 7 10 6 9-1 10-6', '#1e6cbd', 4.5) + P('M12 13v11l-6-5Z', '#3483ce'),
  'add-view': P('M8 3h11v7H8ZM19 6l5-2v7l-5-2Z', '#ddd', '#333') + P('M5 8l2 4 4 0-3 3 1 5-4-2-4 2 1-5-2-3h4Z', '#f5d72c', '#876719', .7),
  screenshot: P('M0 6h6l2-3h7l2 3h7v15H0Z', '#eee', '#bbb', 1.2) + C(13, 13, 6, '#ccc', '#aaa', 1.5) + C(13, 13, 3, '#aaa'),
  vr: P('M0 10 5 4l15-1 4 4-2 11-8 2-3-5-4 6-6-3Z', '#333', '#111') + P('M5 6l14-2 2 4-14 3Z', '#888') + P('M3 12l8-1-4 6Z', '#999'),
  'add-asset': gem + C(17, 17, 5.8, '#fff', '#245', 1.2) + L('M17 14v6M14 17h6', '#134', 1.5),
  vegetation: P('M2 4l20-4v20l-20 4Z', '#b7c3c4', '#ccc') + P('M13 1 7 8l3 0-6 6h4l-5 5 7 0v4h4v-5l8-1-5-4 3-1-6-5Z', '#2e5834', '#3c6640'),
  'material-editor': P('M0 1h24v22H0Z', '#eee', '#4a5662', 1.2) + P('M0 1h6v5H0ZM12 1h6v5h-6ZM6 6h6v6H6ZM18 6h6v6h-6ZM0 12h6v5H0ZM6 17h6v6H6Z', '#4b5864') + C(15, 15, 7, '#d7dde1', '#4a5662', 2) + C(15, 15, 3, '#fff', '#4a5662', 1.5),
  sound: P('M1 8h5l7-6v21l-7-6H1Z', '#eee', '#555', 1.3) + L('M16 8q3 4 0 9M20 5q5 7 0 14', '#777', 1.6),
  'visual-settings': L('M0 5h24M0 12h24M0 19h24', '#344655', 1.6) + D([[5, 5], [14, 12], [20, 19]], '#738390', 2.7),
  'view-settings': L('M0 3h24M0 9h24M0 15h8', '#344655', 1.6) + D([[17, 3], [6, 9]], '#738390', 2.3) + P('M5 18q9-8 18 0-9 7-18 0', '#fff', '#344655', 1.2) + C(14, 18, 3, '#344655'),
  feedback: P('M4 3h16q3 0 3 3v9q0 3-3 3h-5l-3 4-3-4H4q-3 0-3-3V6q0-3 3-3Z', '#eef0f2', '#536371', 1.5) + P('M7 8h4v4l-2 3H7l1-3H7ZM14 8h4v4l-2 3h-2l1-3h-1Z', '#536371'),
  about: P('M1 1h22v22H1Z', '#e7e7e7', '#4d5b68', 1.3) + P('M13 9 23 1v22l-8-5Z', '#e79c28', '#9a6514') + L('M9 4v3M7 11h3l-2 9h3', '#29445c', 2.4),
  'export-scene': P('M3 2h20v21H3Z', '#ddd', '#aaa') + P('M6 17l6-5 10 4v5H6Z', '#999') + L('M0 8h11M8 4l4 4-4 4', '#888', 3),
  'export-as': P('M3 2h20v18H3Z', '#ddd', '#aaa') + P('M6 16l6-5 10 4v4H6Z', '#aaa') + L('M0 8h11M8 4l4 4-4 4', '#888', 3) + C(18, 19, 4, '#ccc', '#999'),
  'report-doc': doc, 'report-table': doc,
  'plan-a': frame, 'plan-b': frame + P('M9 12h5l2 2h8v9H9Z', '#ccc', '#999'), 'plan-save': frame + G('translate(9 9) scale(.65)', floppy('#999')), 'plan-down': frame + P('M15 11h5v6h4l-6 7-7-7h4Z', '#888'),
  pano: land, 'pano-batch': land + P('M10 15h14v8H10Z', '#ddd', '#999') + L('M12 17h10M12 20h10', '#999'),
  'web-export': C(10, 10, 9.500, '#f6f8f9', '#3f5669', 1.2) + L('M1 10h18M10 1v18M3 5q7 4 14 0M3 15q7-4 14 0', '#3f5669') + `<ellipse cx="10" cy="10" rx="4.500" ry="9.500" fill="none" stroke="#3f5669"/>` + P('M12 13h12v10H12Z', '#dce6f0', '#2c5277') + L('M12 16h12M12 20h12M16 13v10M20 13v10', '#2c5277', .8),
  bend: P('M0 20Q2 1 23 1l1 7Q12 9 8 22Z', '#bbb', '#444') + L('M9 12l14 8M8 22l14-3 2-9', '#e88') + P('M0 20l8 2q1-7 6-10l-5-4Q2 12 0 20Z', '#ddd', '#555'),
  'round-corner': boxR('#f2a51f'), 'sharp-corner': boxR('#aeb9ea'), bevel: boxR('#bac29a'),
  'tile-grid': tile('#2986d7') + L('M16 10l-2 12M21 10l-2 12M12 14h12M11 18h12', '#d44', 2),
  'tile-blue': tile('#2c91e4'), 'tile-gold': tile('#d1a72e'), 'tile-green': tile('#8bc72f'), 'tile-red': tile('#df3337'), 'tile-white': tile('#f7f7f7', '#999'),
  'extrude-c': L('M4 6q11-5 15 4 2 9-7 9l-6-3', '#8b4c08', 7) + L('M4 6q11-5 15 4 2 9-7 9l-6-3', '#df8920', 5.5) + L('M5 5q10-2 12 5', '#f6bd65', 1.8),
  'red-corner': P('M2 3h19v18H2Z', '#ee2411', '#8a1a11') + P('M12 12h9v9h-9Z', '#fff', '#955'),
  stripes: P('M3 3h18v18H3Z', '#f5e8e8', '#333', 1.3) + L('M4 9h16M4 15h16', '#d94448', 2),
  flag: P('M3 4q8 3 19-1l-2 14Q12 15 5 21Z', '#fff', '#333', 1.3) + L('M3 4l2 19', '#465', 2.2) + L('M4 6q8 1 18-2', '#d66'),
  'box-brown': P('M1 6l6-2 5 4 11-4v13l-11 4-2-3-8 1Z', '#bd7d42', '#4f2c12', .8) + P('M1 6l8 3v10l-7-1ZM13 9l10-5v13l-10 4Z', '#a0662f', '#4f2c12', .5),
  pipe: L('M2 18l7-3 4-4 7-4', '#888', 6) + L('M3 16l7-4 4-3 7-4', '#ccc', 1.5) + C(19, 7, 3.500, '#eee', '#777') + C(10, 14, 3.500, '#999', '#555'),
  bracket: L('M23 5H9L4 13l6 9', '#777', 3) + L('M22 3H8L2 13l5 7', '#ccc', 1.5),
  'curve-dots': L('M4 21q-1-8 7-13l9-4', '#999') + D([[4, 21], [5, 14], [12, 7], [20, 4]], '#d42b30', 2.5),
  'plus-red': plus('#e35c59'), 'plus-green': plus('#9acc43'), 'cross-blue': G('rotate(45 12 12)', plus('#4384d5')),
  drop: P('M1 22 6 16h12l5 6Z', '#73b82c', '#346112') + drop, 'drop-grid': P('M1 22 6 16h12l5 6Z', '#73b82c', '#346112') + G('translate(3 0)', drop) + L('M4 1v9M8 1v9M1 4h10M1 7h10', '#333', 1.4),
  mirror: P('M11 3v19H1Z', '#e3b846', '#765918') + P('M13 3v19h10Z', '#f2e19c', '#765918') + L('M12 0v23', '#555'),
  hook: hook('#e5ac30'), 'hook-cut': hook('#e5ac30') + L('M7 1l10 10M17 1l-10 10', '#cc2525', 2.5), 'hook-dots': hook('#e5bd55') + D([[8, 19], [5, 11], [7, 4], [14, 3], [20, 7], [18, 14]], '#202b86', 1.8),
  scatter: P('M12 1l4 5-3 1v4h4V8l6 4-6 4v-3h-4v4l3 1-4 5-4-5 3-1v-4H7v3l-6-4 6-4v3h4V7L8 6Z', '#52a6cc', '#346f97', .7),
  crate: P('M5 9l15-3 2 3-3 12-11 2-2-4Z', '#a96a47', '#4f2f20') + P('M5 9h13v13H8Z', '#b67951', '#5f3825') + L('M1 3l18 2v4M1 3l7 6', '#2c8738', 1.6) + D([[1, 3], [19, 4]], '#d33'),
  magnet: L('M4 7h7q10 0 9 5-1 6-10 6l-7-2', '#8e1720', 5) + L('M5 6h7q8 0 8 5', '#e4383b', 2.8) + P('M1 4h4v6H1ZM1 13h4v6H1Z', '#ddd', '#777'),
  blocks: P('M2 3h9v9h11v10H2Z', '#59a623', '#24570e', 1.2) + L('M2 12h9v10M2 7h9M11 17h11', '#24570e') + P('M13 1l6 3 4-2v9l-7-3Z', '#3273af', '#173a61'),
  'cube-grey': box3(2, 11, 12, '#eee', '#449') + P('M9 5l6-4 8 4v5l-6 5-2-7-7 0Z', '#aaa', '#666') + D([[11, 5]], '#d44', 2),
  'cube-turn': box3(1, 12, 11, '#eee', '#449') + G('translate(7 0) scale(.72)', turn('#d9282d')),
  'cube-spin': box3(3, 10, 13, '#eee', '#449') + L('M5 10q0-6 7-7v8h9q3 4 0 8', '#d9282d', 2.3) + P('M5 1l7 2-5 6ZM23 17l-8 2 3 5Z', '#d9282d'),
  inset: P('M2 6l12-4 8 7-2 11-11 3-6-8Z', '#d9cf74', '#777333') + P('M6 8l8-3 5 5-3 8-7-1Z', '#bcd991') + P('M8 8h8v8H8Z', '#e1251f'),
  'quad-cubes': box3(1, 2, 9, '#c95f69', '#422') + box3(12, 2, 10, '#eac847', '#442') + box3(1, 12, 10, '#eee06a', '#442') + box3(12, 12, 10, '#eee06a', '#442'),
  'glass-box': box3(2, 3, 19, '#b5d6d999', '#476f72') + L('M8 3v12H2M8 15h13', '#69898d') + D([[8, 3], [21, 3], [2, 22]], '#464', 1),
  'wood-a': P('M2 2h20v20H2Z', '#eba421', '#774c08') + L('M2 13 13 2M8 22 22 8M2 21 21 2M11 11v10', '#95620f'),
  'wood-b': P('M2 2h20v20H2Z', '#f0ad23', '#774c08') + L('M12 2v20M2 12h20', '#7b5009'),
  'wood-c': P('M2 2h20v20H2Z', '#eba421', '#774c08') + L('M7 2v20M12 2v20M17 2v20M2 7h20M2 12h20M2 17h20', '#9d6810', .8),
  'red-marks': L('M11 4l4 4m0-4-4 4M2 12l5 5m0-5-5 5M15 14l5 5m0-5-5 5', '#bc2228', 2.5),
  'arc-dots': L('M3 21Q0 8 10 4q6-1 11 9', '#666') + D([[4, 21], [2, 14], [6, 7], [12, 3], [18, 6], [22, 12]], '#222', 1.7),
  array: box3(1, 2, 9, '#ddf', '#336') + box3(1, 13, 9, '#ddf', '#336') + box3(13, 13, 9, '#ddf', '#336') + D([[14, 10], [18, 7], [14, 4], [21, 3]], '#333', 1.6),
  compass: C(12, 12, 10, '#fff', '#333', 1.3) + L('M2 12h20M12 2v20', '#444') + C(12, 17, 4, '#222') + C(12, 17, 1.3, '#fff'),
  'sun-angle': L('M2 16h20', '#e88') + L('M10 3v17', '#48a86c') + L('M12 15 19 2', '#333', 3) + C(12, 16, 4.500, '#222') + C(12, 16, 1.5, '#ddd'),
  'protractor-red': L('M4 12a9 9 0 1 1 17 0M12 2v10h9', '#c23037', 1.3) + L('M21 12q-1 7-8 9', '#e88', 2) + P('M3 14h11v8H3Z', '#ccc', '#555') + T(4, 21, '45', '#333', 7),
  select: P('M8 4v15l4-4 3 6 3-1-3-6h6Z', '#111', '#fff', .5),
  component: P('M2 7 14 2l8 5-2 12-10 4-6-5Z', '#ccc', '#888', 1.2) + L('M2 7l9 4 11-4M11 11l-1 12M6 6l12 3v11M3 12l8 5 10-4', '#888', 1.2),
  bucket: P('M7 8 15 2l7 6-3 12-9 2-4-4Z', '#6e6b60', '#222', 1.4) + L('M14 4q9-2 9 6', '#333', 1.5) + P('M0 20q0-10 8-12l6 2q-8 2-8 10-2 4-4 4Z', '#e6a51e', '#71500f') + C(16, 13, 4, '#ccc', '#444'),
  eraser: P('M1 17 11 3l12-1-7 17-12 3Z', '#eda0b4', '#784450') + P('M1 17l10-1 5 3-12 3Z', '#f6c6d2', '#784450') + L('M11 16 23 2M10 11l5-5', '#a95368'),
  move: P('M12 0l4 6-3 2v3h3V8l8 4-8 4v-3h-3v3l3 2-4 6-4-6 3-2v-3H8v3l-8-4 8-4v3h3V8L8 6Z', '#b9292c', '#611', .7),
  'push-pull': P('M0 15l12-6 12 6-12 6Z', '#9a998a', '#333') + P('M0 15l12 6v3L0 18ZM12 21l12-6v3l-12 6Z', '#5c5a51', '#333') + P('M10 16V8H7l5-8 5 8h-3v8Z', '#da2727', '#711', .7),
  rotate: turn('#cc2529'),
  'follow-me': P('M3 22Q-3 6 13 2l10 2 0 6-9-1q-6 2-4 11l-4 3Z', '#55534e', '#222', 1.2) + L('M4 17Q4 7 14 5l8 1', '#99958b', 1.2) + P('M9 9h8v4h6l-5 6-9-1v-3l5-1Z', '#a9282c', '#411'),
  scale: L('M8 2h14v21H8Z', '#f09aa0') + P('M1 7h15v16H1Z', '#a09c8a', '#555') + P('M11 11l5-5-3-2 10-3-1 10-3-3-4 5Z', '#e02626', '#711', .7),
  offset: L('M1 8Q14-5 22 21', '#e96c70', 1.5) + L('M3 13q9-10 12 7', '#333', 1.5) + P('M8 12l5-5-2-2 10-4-1 10-3-1-5 5Z', '#d82527', '#711', .7),
  'd-wall': P('M3 9h7V2h11v20H3Z', plank, '#333') + P('M7 13h7V6h3v12H7Z', '#fff', '#333'),
  'd-parallel': L('M1 2h22', '#222', 1.3) + P('M10 4h5v7h3l-6 7-6-7h4Z', '#e22b22', '#611', .7) + P('M1 20l22-1v4l-2 1H1Z', plank, '#4c3623'),
  'd-extend': P('M1 7l6-4v3h4v3H7v3ZM23 7l-6-4v3h-4v3h4v3Z', '#d5261f', '#611', .6) + P('M1 15h22v5H1Z', plank, '#111', 1.5),
  'd-door': P('M2 1h3v19H2Z', plank, '#333') + L('M5 2Q20 5 21 18', '#333', 1.3) + L('M2 20v4M21 18v6', '#7a5a3d', 3),
  'd-window': P('M1 8h22v7H1Z', '#eee', '#222', 1.3) + L('M1 12h22M12 12v3', '#333'),
  'd-swing': L('M3 17 18 7', '#111', 2) + L('M1 18h22M2 18v3M22 18v3', '#111', 2),
  'd-hand': L('M2 1v18M5 1q5 1 8 5', '#333', 1.3) + L('M10 10q4 0 5 3l6-1M21 12l-3 3q5 1 3 7M10 12l5 5-3 1 4 5M21 19l3 2', '#444', 1.2),
  'd-table': P('M6 6h12l4 5-3 7H6l-4-6Z', plank, '#3f2a1a') + P('M8 3h7v3H8ZM1 9h3v5H1ZM21 9h3v5h-3ZM8 18h7v4H8Z', plank, '#3f2a1a'),
  'd-stairs': P('M0 14 18 1l6 8L6 23Z', '#ad845b', '#5b4028') + L('M3 12l6 8M6 10l6 7M9 8l6 7M12 6l6 7M15 4l6 7', '#5b4028', 1.3),
  'd-dimension': P('M0 3h3v18H0ZM21 3h3v18h-3Z', plank, '#333') + L('M3 12h18M12 6v14', '#222', 1.4) + P('M5 11q3-5 6 0ZM13 11q3-5 6 0Z', '#111'),
  'd-convert': P('M9 1h12v20H5V6Z', '#eee', '#555', 1.5) + P('M1 9l9-3 12 3v9l-9 3-11-2Z', plank, '#3f2a1a') + L('M1 12l20-1M12 8v13M5 8h8v11', '#3f2a1a', 1.3),
  'd-paint': P('M10 2h12v20H2V10h8Z', '#eee', '#555', 1.5) + L('M3 22 14 10', '#d67e2f', 3) + L('M9 15l6-6', '#777', 2) + C(16, 7, 3.500, '#111')
};

const draw = name => `<svg viewBox="0 0 24 24" aria-hidden="true">${icons[name]}</svg>`;

document.querySelectorAll('[data-tools]').forEach(bar => {
  const html = bar.dataset.tools.split(' ').map(t => {
    if (t === '|') return '<span class="sep"></span>';
    const on = t[0] === '*';
    const name = on ? t.slice(1) : t;
    return `<button class="tool${on ? ' on' : ''}" aria-label="${name.replace(/-/g, ' ')}">${draw(name)}</button>`;
  }).join('');
  bar.insertAdjacentHTML('afterbegin', html);
});
document.querySelectorAll('[data-icon]').forEach(el => { el.innerHTML = draw(el.dataset.icon); });
```
